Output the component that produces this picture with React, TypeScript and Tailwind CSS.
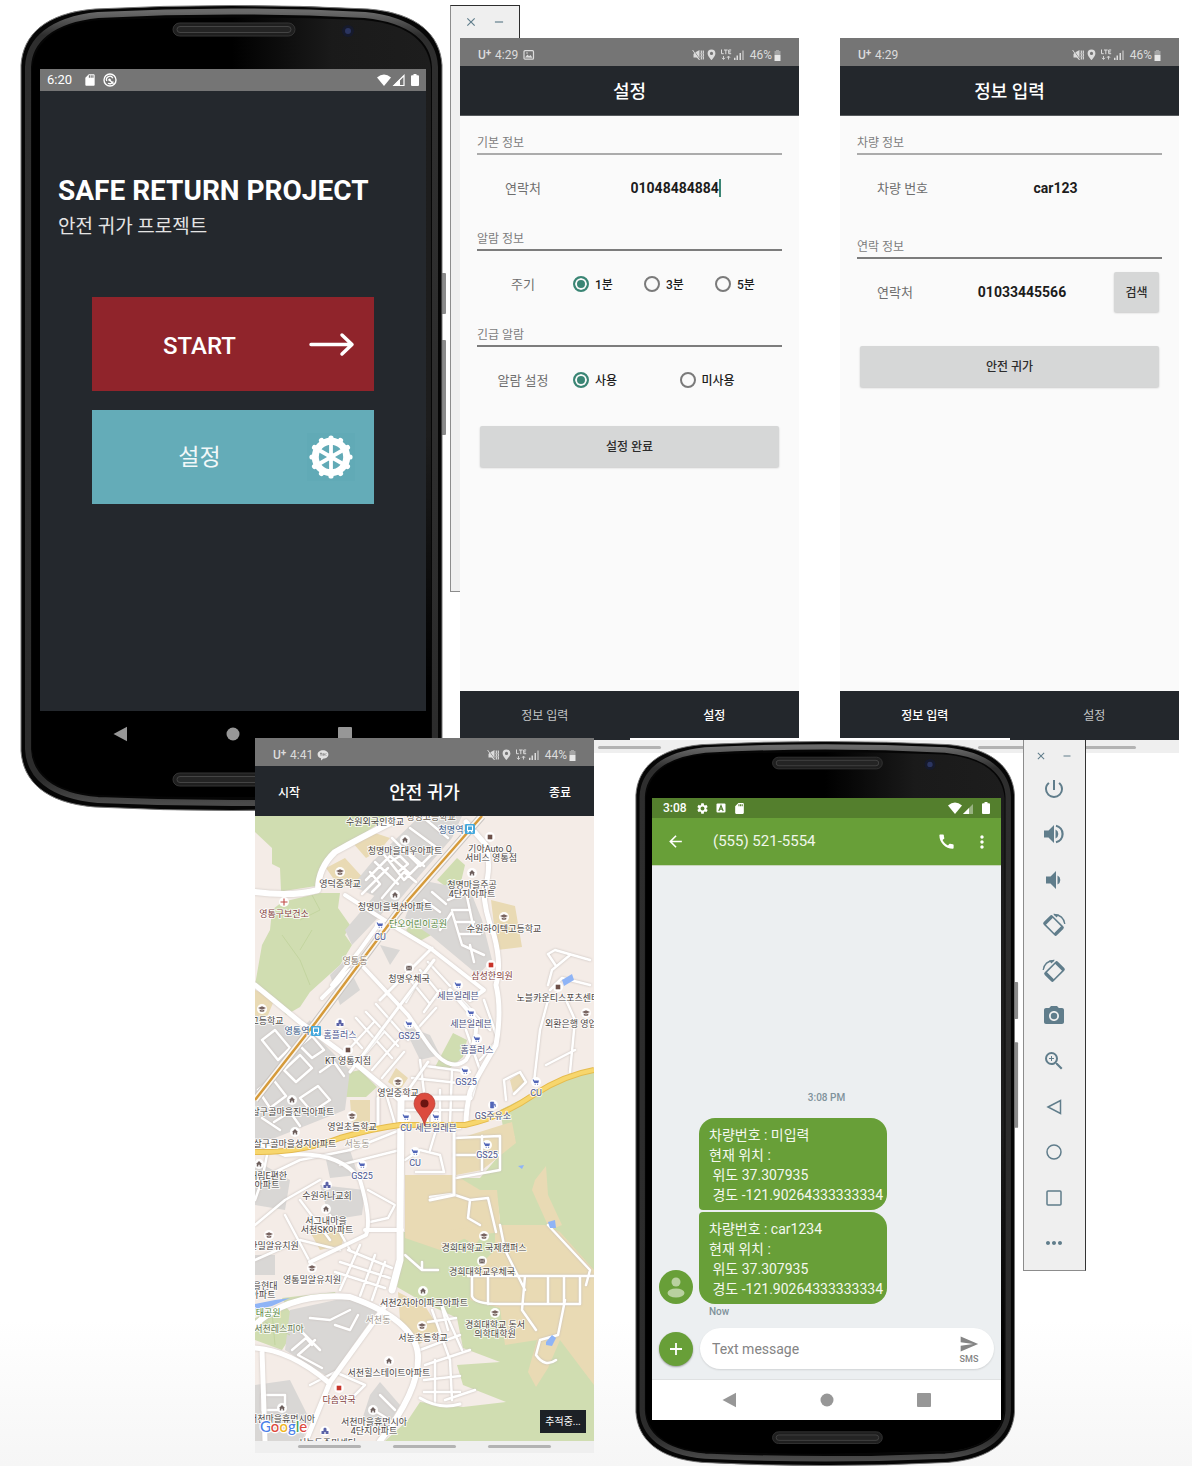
import React from "react";
import {
  MdArrowBack,
  MdCall,
  MdClose,
  MdMoreHoriz,
  MdMoreVert,
  MdPhotoCamera,
  MdPowerSettingsNew,
  MdRemove,
  MdSdCard,
  MdSend,
  MdSettings,
  MdZoomIn,
} from "react-icons/md";

/* ---------- device shell ---------- */

function PhoneShell({ id }: { id: string }) {
  return (
    <svg
      viewBox="0 0 427 806"
      preserveAspectRatio="none"
      className="absolute inset-0 h-full w-full"
      aria-hidden="true"
    >
      <defs>
        <linearGradient id={id + "face"} x1="0" x2="1" y1="0" y2="0">
          <stop offset="0.5" stopColor="#000" />
          <stop offset="0.75" stopColor="#1a1a1a" />
          <stop offset="1" stopColor="#1d1d1d" />
        </linearGradient>
        <linearGradient id={id + "fade"} x1="0" x2="0" y1="0" y2="1">
          <stop offset="0.5" stopColor="#000" stopOpacity="0" />
          <stop offset="0.85" stopColor="#000" />
        </linearGradient>
        <linearGradient id={id + "rim"} x1="0" x2="0" y1="0" y2="1">
          <stop offset="0" stopColor="#6a6a6a" />
          <stop offset="0.03" stopColor="#2e2e2e" />
          <stop offset="0.97" stopColor="#2c2c2c" />
          <stop offset="1" stopColor="#4a4a4a" />
        </linearGradient>
      </defs>
      <rect x="421" y="268" width="5" height="41" rx="1" fill="#8b8b8b" />
      <rect x="421" y="335" width="5" height="95" rx="1" fill="#8b8b8b" />
      <path
        d="M1 60C3 30 25 8 75 4Q212 -3 348 4C398 8 420 30 422 60V746C420 776 398 798 348 802Q212 809 75 802C25 798 3 776 1 746Z"
        fill="#060606"
        stroke="#777"
        strokeWidth="1"
      />
      <path
        d="M8 62C9 36 30 15 78 10Q212 3 345 10C393 15 414 36 415 62V744C414 770 393 791 345 795Q212 801 78 795C30 791 9 770 8 744Z"
        fill="none"
        stroke={"url(#" + id + "rim)"}
        strokeWidth="6"
      />
      <path
        d="M12 64C14 40 31 19 80 15Q212 10 343 15C392 19 409 40 411 64V742C409 766 392 787 343 790Q212 794 80 790C31 787 14 766 12 742Z"
        fill={"url(#" + id + "face)"}
      />
      <path
        d="M12 64H411V742C409 766 392 787 343 790Q212 794 80 790C31 787 14 766 12 742Z"
        fill={"url(#" + id + "fade)"}
      />
      <g fill="#1f1f1f" stroke="#343434">
        <rect x="153" y="18" width="122" height="13" rx="6.5" />
        <rect x="157" y="21.5" width="114" height="6" rx="3" fill="#242424" stroke="#444" />
        <rect x="153" y="768" width="122" height="13" rx="6.5" />
        <rect x="157" y="771.5" width="114" height="6" rx="3" fill="#242424" stroke="#444" />
      </g>
      <circle cx="328" cy="26" r="6" fill="#161a2c" />
      <circle cx="328" cy="26" r="3" fill="#2b3560" />
    </svg>
  );
}

function AndroidNav({ className, gap }: { className: string; gap: string }) {
  return (
    <nav className={"flex items-center justify-center text-[#979797] " + className + " " + gap}>
      <button aria-label="Back" className="flex h-4 w-4 items-center justify-center">
        <svg viewBox="0 0 16 16" className="h-4 w-4" fill="currentColor">
          <path d="M.5 8 14 .800v14.400z" />
        </svg>
      </button>
      <button aria-label="Home" className="flex h-4 w-4 items-center justify-center">
        <svg viewBox="0 0 16 16" className="h-4 w-4" fill="currentColor">
          <circle cx="8" cy="8" r="6.5" />
        </svg>
      </button>
      <button aria-label="Recents" className="flex h-4 w-4 items-center justify-center">
        <svg viewBox="0 0 16 16" className="h-4 w-4" fill="currentColor">
          <rect x="1" y="1" width="14" height="14" rx="1" />
        </svg>
      </button>
    </nav>
  );
}

function WifiSignalBattery({ hollow }: { hollow: boolean }) {
  return (
    <svg viewBox="0 0 44 14" className="h-[14px] w-11" fill="#fff" aria-hidden="true">
      <path d="M1 4.5Q8 -1.5 15 4.5L8 13z" />
      {hollow ? (
        <>
          <path d="M18 12.500 28 2.500V12.500z" fill="none" stroke="#fff" strokeWidth="1.200" />
          <path d="M17 13 24 6V13z" />
        </>
      ) : (
        <>
          <path d="M16 13 26 3V13z" opacity=".4" />
          <path d="M16 13 22 7V13z" />
        </>
      )}
      <path d="M37.500 1h3v1.300H42a1 1 0 0 1 1 1V12a1 1 0 0 1-1 1h-6a1 1 0 0 1-1-1V3.300a1 1 0 0 1 1-1h1.500z" />
    </svg>
  );
}

/* ---------- Samsung style screens ---------- */

function StatusBar({
  time,
  battery,
  notice,
}: {
  time: string;
  battery: string;
  notice?: "photo" | "talk";
}) {
  return (
    <div className="flex h-7 items-center bg-[#757575] px-[18px] pt-[6px] text-[12px] leading-[14px] text-[#dcdcdc]">
      <span className="w-[17px] font-medium">
        U<sup className="relative -top-[3px] text-[10px] leading-none font-bold">+</sup>
      </span>
      <span>{time}</span>
      {notice === "photo" && (
        <svg viewBox="0 0 12 12" className="ml-[5px] h-3 w-3" aria-hidden="true">
          <rect x="1" y="1.700" width="9.500" height="8.500" rx="1" fill="none" stroke="#dcdcdc" strokeWidth="1.200" />
          <path d="M2 8.500 4.500 5.500 6 7.200 7.500 6 9.500 8.700z" fill="#dcdcdc" />
          <circle cx="4" cy="4" r=".8" fill="#dcdcdc" />
        </svg>
      )}
      {notice === "talk" && (
        <svg viewBox="0 0 12 12" className="ml-[4px] h-3 w-3" aria-hidden="true">
          <path d="M6 1.200c3 0 5.400 1.800 5.400 4.200S9 9.500 6.500 9.500L4 11.500V9.200C2 8.700.6 7.200.6 5.400.6 3 3 1.200 6 1.200z" fill="#e2e2e2" />
          <path d="M3 4.300h2M4 4.300v2.400M6 6.700v-2.400M7 4.300v2.400M9.200 4.300 8 5.500l1.200 1.200" stroke="#757575" strokeWidth=".8" fill="none" />
        </svg>
      )}
      <svg viewBox="0 0 54 14" className="mr-[4px] ml-auto h-[14px] w-[54px]" fill="#dcdcdc" aria-hidden="true">
        <path d="M3 4.500 7.500 2v10L4.500 9.500H1.500V6z" />
        <path d="M1 1.500 8 11.500" stroke="#757575" strokeWidth=".8" />
        <path d="M.6 2 7.500 12" stroke="#dcdcdc" strokeWidth=".9" />
        <path d="M9 2.500 9.500 4 9 5.500 9.500 7 9 8.500 9.500 10 9 11.500M11 2.500 11.500 4 11 5.500 11.500 7 11 8.500 11.500 10 11 11.500" stroke="#dcdcdc" strokeWidth="1.100" fill="none" />
        <path fillRule="evenodd" d="M19.500 1.500a3.900 3.900 0 0 0-3.900 3.900c0 2.700 3.900 6.600 3.900 6.600s3.900-3.900 3.900-6.600a3.900 3.900 0 0 0-3.900-3.900zm0 2.300a1.600 1.600 0 1 1 0 3.200 1.600 1.600 0 0 1 0-3.200z" />
        <path d="M29.500 1.500v4.200h2.200M32 2h3.600M33.800 2v4.200M39.200 2h-2.500v3.700H39.200M36.700 3.900h2" stroke="#dcdcdc" strokeWidth="1" fill="none" />
        <path d="M31.500 8v3M30 9.800 31.500 11.500 33 9.800M36.500 11.500v-3M35 9.800 36.500 8 38 9.800" stroke="#dcdcdc" strokeWidth=".9" fill="none" />
        <path d="M42 9.800h1.500V12H42zM44.500 7.500H46V12h-1.500zM47.500 5H49v7h-1.500zM50.500 2.500h1V12h-1z" />
      </svg>
      <span>{battery}</span>
      <svg viewBox="0 0 7 11" className="ml-[2px] h-[11px] w-[7px]" aria-hidden="true">
        <path d="M2 0h3v1h1.500v4H.500V1H2z" fill="#a5a5a5" />
        <path d="M.5 5h6v6h-6z" fill="#e8e8e8" />
      </svg>
    </div>
  );
}

function GestureBar({ className }: { className: string }) {
  return (
    <div className={"flex justify-center gap-8 bg-[#efefef] " + className}>
      <span className="h-[3px] w-[63px] rounded-full bg-[#b3b3b3]" />
      <span className="h-[3px] w-[63px] rounded-full bg-[#b3b3b3]" />
      <span className="h-[3px] w-[63px] rounded-full bg-[#b3b3b3]" />
    </div>
  );
}

function TitleBar({ children }: { children: React.ReactNode }) {
  return (
    <header className="flex h-[50px] items-center justify-center border-b border-[#55595c] bg-[#23272c] pt-[3px] text-[18px] leading-6 font-medium text-white">
      {children}
    </header>
  );
}

function Tabs({ active }: { active: "info" | "setup" }) {
  const on = "flex-1 border-b-2 border-white pt-[3px] font-medium text-white";
  const off = "flex-1 border-b-2 border-[#23272c] pt-[3px] text-[#c4c5c6]";
  return (
    <nav className="mt-auto flex h-[49px] bg-[#23272c] text-[12px]">
      <button className={active === "info" ? on : off}>정보 입력</button>
      <button className={active === "setup" ? on : off}>설정</button>
    </nav>
  );
}

function SectionTitle({ children, light }: { children: React.ReactNode; light?: boolean }) {
  return (
    <h3
      className={
        light
          ? "h-[26px] border-b-2 border-[#ababab] text-[12px] leading-7 text-[#7d7d7d]"
          : "h-[26px] border-b-2 border-[#7c7c7c] text-[12px] leading-7 text-[#7d7d7d]"
      }
    >
      {children}
    </h3>
  );
}

function RadioRow({ label, name, options }: { label: string; name: string; options: string[] }) {
  return (
    <div role="radiogroup" aria-label={label} className="flex h-[66px] items-center">
      <span className="w-[92px] pt-px text-center text-[13px] text-[#6e6e6e]">{label}</span>
      <div className="-mr-1 flex flex-1 pl-1">
        {options.map((o, i) => (
          <label key={o} className="flex flex-1 items-center gap-[6px] text-[12px] font-medium text-[#1c1c1c]">
            <input
              type="radio"
              name={name}
              defaultChecked={i === 0}
              className="h-4 w-4 shrink-0 appearance-none rounded-full border-2 border-[#7a7a7a] checked:border-[#3a8574] checked:bg-[#3a8574] checked:shadow-[inset_0_0_0_2px_#fafafa]"
            />
            <span className="pt-px">{o}</span>
          </label>
        ))}
      </div>
    </div>
  );
}

const greyButton =
  "rounded-[2px] bg-[#d6d7d7] pt-px text-[12px] font-medium text-[#2c2c2c] shadow-[0_1px_2px_rgba(0,0,0,0.2)]";

function SettingsScreen() {
  return (
    <section className="relative flex h-[715px] flex-col bg-[#fafafa]">
      <StatusBar time="4:29" battery="46%" notice="photo" />
      <TitleBar>
        <h2>설정</h2>
      </TitleBar>
      <div className="flex flex-col gap-1 px-[17px] pt-[13px]">
        <div>
          <SectionTitle light>기본 정보</SectionTitle>
          <div className="flex h-[66px] items-center">
            <label htmlFor="my-phone" className="w-[92px] pt-px text-center text-[13px] text-[#6e6e6e]">
              연락처
            </label>
            <div className="flex flex-1 items-center justify-center">
              <input
                id="my-phone"
                defaultValue="01048484884"
                className="w-[88px] bg-transparent text-right text-[14px] font-bold text-[#1c1c1c] outline-none"
              />
              <span className="h-[18px] w-[2px] bg-[#3a8574]" />
            </div>
          </div>
        </div>
        <div>
          <SectionTitle>알람 정보</SectionTitle>
          <RadioRow label="주기" name="cycle" options={["1분", "3분", "5분"]} />
        </div>
        <div>
          <SectionTitle>긴급 알람</SectionTitle>
          <RadioRow label="알람 설정" name="alarm" options={["사용", "미사용"]} />
        </div>
      </div>
      <button className={"mx-5 mt-[13px] h-[41px] " + greyButton}>설정 완료</button>
      <Tabs active="setup" />
      <GestureBar className="h-[13px] pt-[6px]" />
    </section>
  );
}

function InfoScreen() {
  return (
    <section className="flex h-[715px] flex-col bg-[#fafafa]">
      <StatusBar time="4:29" battery="46%" />
      <TitleBar>
        <h2>정보 입력</h2>
      </TitleBar>
      <div className="flex flex-col gap-3 px-[17px] pt-[13px]">
        <div>
          <SectionTitle light>차량 정보</SectionTitle>
          <div className="flex h-[66px] items-center">
            <label htmlFor="car" className="w-[92px] pt-px pl-5 text-[13px] text-[#6e6e6e]">
              차량 번호
            </label>
            <input
              id="car"
              defaultValue="car123"
              className="w-0 flex-1 bg-transparent text-center text-[14px] font-bold text-[#1c1c1c] outline-none"
            />
          </div>
        </div>
        <div>
          <SectionTitle>연락 정보</SectionTitle>
          <div className="flex h-[66px] items-center pr-[3px]">
            <label htmlFor="contact" className="w-[73px] pt-px pl-5 text-[13px] text-[#6e6e6e]">
              연락처
            </label>
            <input
              id="contact"
              defaultValue="01033445566"
              className="w-0 flex-1 bg-transparent text-center text-[14px] font-bold text-[#1c1c1c] outline-none"
            />
            <button className={"h-10 w-[45px] " + greyButton}>검색</button>
          </div>
        </div>
      </div>
      <button className={"mx-5 mt-[21px] h-[41px] " + greyButton}>안전 귀가</button>
      <Tabs active="info" />
      <GestureBar className="h-[13px] pt-[6px]" />
    </section>
  );
}

/* ---------- map ---------- */

type Poi = "home" | "school" | "cart" | "dot" | "red" | "cross" | "mail" | "gas" | "build";

function PoiIcon({ x, y, kind }: { x: number; y: number; kind: Poi }) {
  return (
    <g transform={`translate(${x} ${y})`}>
      <circle r="5" fill="#fff" fillOpacity=".95" />
      {kind === "home" && <path d="M0-3 3 0H2.200V2.600H.700V.8H-.700V2.600H-2.200V0H-3z" fill="#6d5f5c" />}
      {kind === "school" && <path d="M0-2.800 4-1 0 .8-4-1zM-2.300.6 0 1.600 2.300.6V2.200Q0 3.400-2.300 2.200z" fill="#77635f" />}
      {kind === "cart" && <path d="M-3.500-2.600h1.300l.4 1H3L2.300 1.100H-1.800zM-1.300 1.700h1v1h-1zM1.100 1.700h1v1h-1z" fill="#5266b8" />}
      {kind === "dot" && <path d="M-2.300-2.300h4.600v4.600h-4.600z" fill="#6d5049" />}
      {kind === "red" && <path d="M-2.300-2.300h4.600v4.600h-4.600z" fill="#c8352b" />}
      {kind === "cross" && <path d="M-3.500 0h7M0-3.500v7" stroke="#c24b47" strokeWidth="1.100" />}
      {kind === "mail" && (
        <>
          <path d="M-2.800-2.200h5.600v4.600h-5.600z" fill="#6d5f5c" />
          <path d="M-2.800-2 0 .4 2.800-2M-2.800 2.200-.8 0M2.800 2.200.8 0" fill="none" stroke="#fff" strokeWidth=".5" />
        </>
      )}
      {kind === "gas" && <path d="M-2.500-3h3.200V3h-3.200zM.7-1l1.700.4V2" fill="#5266b8" stroke="#5266b8" strokeWidth=".6" />}
      {kind === "build" && <path d="M-3.500 3V0h2V-2.500L0-3.500 1.500-2.500V0h2v3H.600V1H-.600v2z" fill="#5b63a8" />}
    </g>
  );
}

const pois: [number, number, Poi][] = [
  [405, 840, "home"], [340, 872, "school"], [395, 895, "home"], [472, 873, "home"],
  [490, 837, "dot"], [284, 902, "cross"], [380, 925, "cart"], [504, 917, "school"],
  [409, 968, "mail"], [491, 965, "red"], [458, 985, "cart"], [558, 987, "dot"],
  [262, 1009, "school"], [340, 1023, "build"], [409, 1024, "cart"], [471, 1013, "cart"],
  [586, 1013, "school"], [348, 1050, "dot"], [477, 1039, "cart"], [465, 1071, "cart"],
  [398, 1082, "school"], [292, 1100, "home"], [536, 1082, "cart"], [493, 1105, "gas"],
  [352, 1116, "school"], [406, 1117, "cart"], [436, 1117, "cart"], [295, 1132, "home"],
  [415, 1152, "cart"], [487, 1145, "cart"], [362, 1165, "cart"], [259, 1164, "home"],
  [327, 1185, "build"], [326, 1209, "home"], [269, 1235, "school"], [484, 1236, "school"],
  [482, 1261, "mail"], [312, 1268, "school"], [423, 1291, "home"], [495, 1313, "school"],
  [422, 1326, "school"], [389, 1361, "home"], [282, 1408, "home"], [373, 1410, "home"],
  [339, 1388, "red"], [325, 1431, "build"],
];

const labels: [number, number, string, string][] = [
  [375, 825, "수원외국인학교", "#4b4644"],
  [431, 820, "청명고등학교", "#6a5c4c"],
  [451, 833, "청명역", "#35598a"],
  [405, 854, "청명마을대우아파트", "#4b4644"],
  [490, 852, "기아Auto Q", "#4b4644"],
  [491, 861, "서비스 영통점", "#4b4644"],
  [340, 887, "영덕중학교", "#4b4644"],
  [472, 888, "청명마을주공", "#4b4644"],
  [472, 897, "4단지아파트", "#4b4644"],
  [395, 910, "청명마을벽산아파트", "#4b4644"],
  [284, 917, "영통구보건소", "#84423f"],
  [418, 927, "단오어린이공원", "#57883c"],
  [380, 940, "CU", "#4a5692"],
  [504, 932, "수원하이텍고등학교", "#4b4644"],
  [355, 964, "영통동", "#8a7a6c"],
  [409, 982, "청명우체국", "#4b4644"],
  [492, 979, "삼성한의원", "#84423f"],
  [458, 999, "세븐일레븐", "#4a5080"],
  [558, 1001, "노블카운티스포츠센터", "#4b4644"],
  [267, 1024, "고등학교", "#4b4644"],
  [297, 1034, "영통역", "#35598a"],
  [340, 1038, "홈플러스", "#4a5692"],
  [409, 1039, "GS25", "#4a5692"],
  [471, 1027, "세븐일레븐", "#4a5080"],
  [575, 1027, "외환은행 영업부", "#4b4644"],
  [348, 1064, "KT 영통지점", "#4b4644"],
  [477, 1053, "홈플러스", "#4a5080"],
  [466, 1085, "GS25", "#4a5692"],
  [398, 1096, "영일중학교", "#4b4644"],
  [536, 1096, "CU", "#4a5692"],
  [293, 1115, "살구골마을진덕아파트", "#4b4644"],
  [493, 1119, "GS주유소", "#4a5080"],
  [352, 1130, "영일초등학교", "#4b4644"],
  [406, 1131, "CU", "#4a5692"],
  [436, 1131, "세븐일레븐", "#4a5080"],
  [295, 1147, "살구골마을성지아파트", "#4b4644"],
  [357, 1147, "서농동", "#a39a90"],
  [415, 1166, "CU", "#4a5692"],
  [487, 1158, "GS25", "#4a5692"],
  [362, 1179, "GS25", "#4a5692"],
  [268, 1179, "대림E편한", "#4b4644"],
  [267, 1188, "아파트", "#4b4644"],
  [327, 1199, "수원하나교회", "#4b4644"],
  [326, 1224, "서그내마을", "#4b4644"],
  [327, 1233, "서천SK아파트", "#4b4644"],
  [274, 1249, "한밀알유치원", "#4b4644"],
  [484, 1251, "경희대학교 국제캠퍼스", "#4b4644"],
  [482, 1275, "경희대학교우체국", "#4b4644"],
  [312, 1283, "영통밀알유치원", "#4b4644"],
  [261, 1289, "마을현대", "#4b4644"],
  [263, 1298, "아파트", "#4b4644"],
  [424, 1306, "서천2차아이파크아파트", "#4b4644"],
  [264, 1316, "생태공원", "#57883c"],
  [378, 1323, "서천동", "#a39a90"],
  [279, 1332, "서천레스피아", "#66784f"],
  [495, 1328, "경희대학교 동서", "#4b4644"],
  [495, 1337, "의학대학원", "#4b4644"],
  [423, 1341, "서농초등학교", "#4b4644"],
  [389, 1376, "서천힐스테이트아파트", "#4b4644"],
  [339, 1403, "다솜약국", "#84423f"],
  [282, 1422, "서천마을휴먼시아", "#4b4644"],
  [374, 1425, "서천마을휴먼시아", "#4b4644"],
  [374, 1434, "4단지아파트", "#4b4644"],
  [327, 1446, "서농동주민센터", "#4b4644"],
];

function MapDrawing() {
  return (
    <svg
      viewBox="255 816 339 625"
      preserveAspectRatio="xMidYMid slice"
      className="block h-[625px] w-full"
      role="img"
      aria-label="Map of Yeongtong-dong"
    >
      <rect x="255" y="816" width="339" height="625" fill="#f4ece7" />
      {/* parks and forest */}
      <g fill="#d0ddb1">
        <path d="M255 816H390L360 836 333 851 320 868 316 886 284 891H281L280 868 272 864V848L255 832z" />
        <path d="M282 902 320 893H340L338 908 350 925 345 935 352 945 340 965 310 992 300 1007 286 1015 275 998 255 985 262 945 270 930 272 910z" />
        <path d="M457 858 465 865 460 886H445L437 880zM413 922 430 920 437 932 418 942 406 930zM453 1033 467 1040 463 1057 450 1068 435 1067zM346 1073 360 1070 377 1087 366 1097H346z" />
        <path d="M594 1072 570 1074 534 1093 500 1110 503 1127 515 1137 480 1178H455L463 1190H496L500 1220 470 1232H403V1252L397 1287 423 1302 457 1318 463 1348 500 1362 457 1365 463 1385 506 1402 463 1407 420 1402 408 1420 385 1441H594z" />
        <path d="M255 1318 285 1306 300 1322 282 1350 255 1340zM282 1298 335 1292 337 1297 285 1304z" />
      </g>
      {/* school grounds and campus */}
      <g fill="#e9dab4">
        <path d="M334 856 352 842 366 858 380 850 390 838 372 832zM326 868 345 858 365 880 340 888zM491 900 515 906 522 947 497 950z" />
        <path d="M255 990 275 998 268 1015 255 1022zM396 1068 408 1078 400 1090 388 1082zM350 1100H370V1125H352zM437 816H452L436 828 415 826z" />
        <path d="M454 1140 512 1122 516 1143 482 1170 456 1175zM405 1175H455L480 1190H497L501 1232 470 1236 440 1250 405 1238z" />
        <path d="M308 1228H345L342 1245 320 1250zM398 1292 425 1306 440 1330 418 1345 400 1320z" />
        <path d="M470 1275 495 1250V1225H545L560 1232 594 1270V1385L560 1340 548 1368 536 1387 528 1372 537 1340 505 1345 500 1308 470 1300zM535 1180 546 1166 548 1195 562 1225 550 1230 532 1190zM450 1230 490 1225 475 1245zM510 1080 522 1072 525 1085 513 1092z" />
      </g>
      {/* apartment blocks */}
      <g fill="#d9d7d5">
        <path d="M372 862 420 816H462L452 838 420 875 395 905 352 886zM420 880 445 885 470 890 482 920 492 960 478 975 430 935 405 918zM345 930 375 895 390 905 352 945z" />
        <path d="M255 1015 285 1025 320 1040 350 1070 345 1110 270 1140 255 1140zM255 1075 310 1020 325 1050 290 1110z" />
        <path d="M380 945 400 950 390 965zM403 1025 430 1035 440 1055 420 1060zM330 975 345 960 360 990 340 1005zM325 1155 350 1150 358 1175 330 1178zM320 1185 365 1190 362 1215 330 1220z" />
        <path d="M290 1310 345 1298 378 1310 330 1378 285 1350zM255 1385 290 1380 310 1420 302 1441H255zM370 1395 380 1382 400 1405 385 1430 362 1420zM255 1255H275V1275H255zM255 1160 290 1180 285 1210 255 1205z" />
      </g>
      {/* local streets */}
      <g
        fill="none"
        stroke="#fff"
        strokeWidth="2.500"
        strokeLinejoin="round"
        strokeLinecap="round"
        className="drop-shadow-[0_0_1px_#c4bcb8]"
      >
        <path d="M366 880 390 856 410 874M375 862 398 884M362 894 388 868M382 852 404 880 418 866M400 846 424 866M392 838 420 866 436 850M410 828 440 850M424 818 448 838M382 898 404 872 416 882M370 872 380 884 372 892M390 862 400 856 408 864 398 872z" />
        <path d="M448 900 466 892 474 930M452 910H470M456 922H474M460 934H480M440 930 452 912 462 945 484 955M470 945 474 962M424 900 440 912M432 892 446 904" />
        <path d="M262 1040 275 1030 290 1048 278 1060zM284 1070 300 1055 312 1068 296 1082zM258 1090 272 1078 286 1096 270 1108zM300 1046 312 1036 324 1050 312 1058zM274 1122 290 1112 300 1126M262 1118 280 1130M300 1098 318 1086 330 1100 312 1112zM320 1072 334 1062 344 1076" />
        <path d="M346 1030 362 1048M356 1018 392 1058M366 1012 398 1046M376 1004 408 1040M360 1060 384 1032M350 1048 374 1022M372 1070 398 1040M382 1078 404 1052" />
        <path d="M420 970 438 992M412 982 430 1004M428 962 450 986M406 1002 420 978M424 1012 440 990M418 1028 436 1008" />
        <path d="M408 1098H466M405 1110H468M420 1060 428 1124M440 1090V1124M452 1070 450 1124M412 1078 468 1084M426 1066 470 1072M432 1100V1124M385 1090 395 1124M378 1090V1124M466 1030 480 1070 472 1098M484 1000 498 1040 480 1060M462 1000 490 1030" />
        <path d="M335 1272 385 1288M340 1262 390 1278M348 1250 392 1268M360 1245 340 1290M375 1255 360 1296M385 1262 372 1300M255 1260 300 1240 340 1250M300 1200 330 1240M285 1215 310 1262M330 1215 350 1250M340 1165 400 1150M350 1150 400 1130" />
        <path d="M432 1310 450 1360 452 1400M442 1305 462 1350M425 1365 470 1350M424 1380 460 1376M424 1392 460 1392M420 1350 460 1335M440 1300 448 1330M435 1360V1402M445 1400 475 1390M428 1322 456 1318" />
        <path d="M300 1330 320 1350M310 1318 330 1320 350 1310M315 1340 298 1355 322 1368M335 1325 350 1330 358 1315M262 1395H285V1410H262zM380 1395 395 1410M370 1408 390 1420M310 1385 335 1372 365 1385 350 1400M292 1350 306 1338 312 1345" />
        <path d="M454 1138 500 1136V1170L456 1178M405 1160 420 1150 440 1155 444 1172 416 1172M430 1150 436 1130 460 1128M482 1136V1170M454 1155H500M430 1197 452 1194 470 1200 488 1198 496 1232M470 1200 468 1218 480 1225" />
        <path d="M468 1276H594M472 1276V1296Q474 1304 500 1304H580V1276M488 1276V1304M548 1276V1304M564 1276V1304M525 1276 522 1310 536 1330M525 1290 505 1250 500 1225M548 1225 590 1270 586 1285M565 1300 558 1335 540 1340 536 1355Q545 1368 556 1360M405 1255 422 1270H438M422 1262V1270" />
        <path d="M556 966 548 954 555 950 590 960M548 985 552 970 570 955M590 985 562 978 550 990M534 1082 540 1030 548 1000M570 1072 575 1020 566 1000M575 1050 546 1065M506 1100 504 1080 520 1072 526 1082 514 1094" />
        <path d="M258 1180 300 1160 350 1150M270 1140 262 1180 255 1200M255 1225 285 1200 320 1180M368 1190 395 1205 388 1218 370 1222" />
      </g>
      <path
        d="M282 935 300 960 310 985M300 920 320 910 312 895M265 1322 290 1335M272 1312 275 1345M300 950 312 930"
        fill="none"
        stroke="#bfd29a"
        strokeWidth=".8"
      />
      {/* main streets */}
      <g
        fill="none"
        stroke="#fff"
        strokeLinecap="round"
        strokeLinejoin="round"
        className="drop-shadow-[0_0_1px_#c9c1bd]"
      >
        <path d="M392 822Q360 838 335 852 318 868 318 890 292 897 255 892" strokeWidth="6" />
        <path d="M466 822 486 845Q492 870 484 890 484 910 494 935 502 965 496 985 502 1010 496 1045 475 1080 470 1092 466 1110 466 1124" strokeWidth="5" />
        <path d="M345 895 400 930 430 948 484 990 470 1000" strokeWidth="4" />
        <path d="M255 985 300 1022 345 1055 385 1088 400 1100" strokeWidth="5" />
        <path d="M332 985 360 950 378 925M322 998 350 970M355 958 408 1015 425 1040Q448 1075 466 1060 478 1040 476 1020L450 990" strokeWidth="4" />
        <path d="M350 1072 434 960M404 1096 428 1062M432 948 380 1000" strokeWidth="3" />
        <path d="M402 1098H470" strokeWidth="5" />
        <path d="M401 1100 400 1228V1260L392 1290" strokeWidth="7" />
        <path d="M255 1142 285 1155Q340 1150 360 1180 372 1220 366 1235L310 1262" strokeWidth="4" />
        <path d="M378 1098V1125M454 1124 454 1195 430 1200" strokeWidth="3" />
        <path d="M255 1325Q290 1292 350 1297 415 1320 418 1355 420 1390 380 1441" strokeWidth="6" />
        <path d="M385 1306 330 1382 306 1441M255 1348Q290 1350 328 1382M262 1350 265 1441" strokeWidth="5" />
        <path d="M365 1230H402" strokeWidth="4" />
        <path d="M420 1398Q440 1410 460 1404" strokeWidth="3" />
      </g>
      {/* arterial road */}
      <path d="M255 1152Q300 1153 340 1138 375 1128 400 1125H465Q500 1118 535 1094 565 1075 594 1070" fill="none" stroke="#e5bb4d" strokeWidth="6" />
      <path d="M255 1152Q300 1153 340 1138 375 1128 400 1125H465Q500 1118 535 1094 565 1075 594 1070" fill="none" stroke="#f7d66d" strokeWidth="4" />
      {/* railway */}
      <path d="M482 816 398 912 316 1022 255 1100" fill="none" stroke="#c9c5c2" strokeWidth="8" />
      <path d="M482 816 398 912 316 1022 255 1100" fill="none" stroke="#faf6f1" strokeWidth="6" />
      <path d="M482 816 398 912 316 1022 255 1100" fill="none" stroke="#d59a3a" strokeWidth="2.500" />
      {/* water */}
      <path d="M562 980 572 974 574 980 564 986zM518 1166 524 1165 522 1169zM548 1222 555 1220 556 1228 550 1228zM546 1342 552 1335 556 1338 552 1346 546 1345zM255 1304 275 1300 290 1298 272 1306 255 1310z" fill="#8fb4f6" />
      {/* stations */}
      {[
        [470, 829],
        [316, 1031],
      ].map(([x, y]) => (
        <g key={x}>
          <rect x={x - 5} y={y - 5} width="10" height="10" rx="1" fill="#45a8dc" />
          <path d={`M${x - 2.5} ${y - 3}h5v4.500h-5zM${x - 2.5} ${y + 3.5}l1.500-1.500M${x + 2.5} ${y + 3.5}l-1.500-1.500`} fill="none" stroke="#fff" strokeWidth="1.100" />
        </g>
      ))}
      {pois.map(([x, y, kind]) => (
        <PoiIcon key={x + "-" + y} x={x} y={y} kind={kind} />
      ))}
      <g
        textAnchor="middle"
        fontSize="9"
        stroke="#fff"
        strokeOpacity=".8"
        strokeWidth="2"
        strokeLinejoin="round"
        paintOrder="stroke"
      >
        {labels.map(([x, y, text, color]) => (
          <text key={text + x + y} x={x} y={y} fill={color}>
            {text}
          </text>
        ))}
      </g>
      {/* pin */}
      <path d="M424.500 1126C423 1115 414 1111 414 1103.500a10.500 10.500 0 0 1 21 0C435 1111 426 1115 424.500 1126z" fill="#dc4b3e" stroke="#b13a30" strokeWidth=".7" />
      <circle cx="424.500" cy="1103.500" r="4" fill="#6c1511" />
      <text x="260" y="1432" fontSize="15" fontWeight="500" stroke="#fff" strokeWidth="2.500" paintOrder="stroke" fontFamily="Lato, sans-serif">
        <tspan fill="#4a80e8">G</tspan>
        <tspan fill="#dd4b3e">o</tspan>
        <tspan fill="#f0b51c">o</tspan>
        <tspan fill="#4a80e8">g</tspan>
        <tspan fill="#3f9e52">l</tspan>
        <tspan fill="#dd4b3e">e</tspan>
      </text>
    </svg>
  );
}

function MapScreen() {
  return (
    <section className="flex flex-col">
      <StatusBar time="4:41" battery="44%" notice="talk" />
      <header className="flex h-[50px] items-center justify-between bg-[#23272c] px-[23px] pt-[3px] text-[12px] font-medium text-white">
        <button>시작</button>
        <h2 className="text-[18px] leading-6">안전 귀가</h2>
        <button>종료</button>
      </header>
      <div className="relative">
        <MapDrawing />
        <div className="absolute right-2 bottom-2 flex h-[23px] w-[46px] items-center justify-center bg-[#1d2126] text-[10px] text-white">
          추적중...
        </div>
      </div>
      <GestureBar className="h-3 pt-1" />
    </section>
  );
}

/* ---------- launcher phone ---------- */

function HomePhone() {
  return (
    <section className="relative h-[806px] pt-16 pr-[21px] pl-5">
      <PhoneShell id="home" />
      <div className="relative">
        <div className="flex h-[22px] items-center bg-[#757575] pr-[6px] pl-[7px] text-[13px] text-white">
          <span>6:20</span>
          <MdSdCard className="ml-[11px] h-[14px] w-[14px]" />
          <svg viewBox="0 0 14 14" className="ml-[6px] h-[14px] w-[14px]" fill="none" stroke="#fff" aria-hidden="true">
            <circle cx="7" cy="7" r="6" strokeWidth="1.400" />
            <path d="M3.800 8A3.300 3.300 0 0 1 9.800 5.200M5 10.200A3.600 3.600 0 0 0 10.200 8.500M6 6.500 10.500 10.800" strokeWidth="1.300" />
            <circle cx="6.500" cy="6.800" r="1" fill="#fff" strokeWidth=".5" />
          </svg>
          <span className="ml-auto">
            <WifiSignalBattery hollow />
          </span>
        </div>
        <div className="flex h-[620px] flex-col bg-[#24282d] pt-[83px] text-white">
          <h1 className="px-[18px] text-[28px] leading-[34px] font-bold whitespace-nowrap">SAFE RETURN PROJECT</h1>
          <p className="mt-[7px] px-[18px] text-[19px] leading-6 text-[#e4e4e4]">안전 귀가 프로젝트</p>
          <div className="mx-[52px] mt-[58px] flex flex-col gap-[19px] text-[24px]">
            <button className="flex h-[94px] items-center bg-[#90242b] pr-[19px] font-medium">
              <span className="flex-1 pt-[3px]">START</span>
              <svg viewBox="0 0 48 48" className="h-12 w-12" fill="none" stroke="#fff" strokeWidth="3.500" strokeLinecap="round" strokeLinejoin="round" aria-hidden="true">
                <path d="M4 24.500H45M35 15 45 24.500 35 34" />
              </svg>
            </button>
            <button className="flex h-[94px] items-center bg-[#64acb8] pr-[19px] text-[23px] text-[#f2f8f9]">
              <span className="flex-1 pt-[3px]">설정</span>
              <svg viewBox="-24 -24 48 48" className="h-12 w-12 bg-[#61aab6]" aria-hidden="true">
                <circle r="15.700" fill="none" stroke="#fff" strokeWidth="7" />
                {[0, 30, 60, 90, 120, 150, 180, 210, 240, 270, 300, 330].map((a) => (
                  <circle key={a} cy="-19" r="2.600" fill="#fff" transform={`rotate(${a})`} />
                ))}
                {[0, 60, 120].map((a) => (
                  <path key={a} d="M0-14V14" stroke="#fff" strokeWidth="3.800" transform={`rotate(${a})`} />
                ))}
                <circle r="4" fill="#fff" />
              </svg>
            </button>
          </div>
        </div>
        <AndroidNav className="h-[45px] bg-black" gap="gap-24" />
      </div>
    </section>
  );
}

/* ---------- messaging phone ---------- */

function Bubble({ car, className }: { car: string; className: string }) {
  return (
    <p className={"w-[188px] bg-[#689f38] px-[10px] pt-[7px] pb-[5px] text-[14px] leading-5 whitespace-pre text-[#f4f8ef] " + className}>
      {"차량번호 : " + car + "\n현재 위치 :\n 위도 37.307935\n 경도 -121.90264333333334"}
    </p>
  );
}

function MessagePhone() {
  return (
    <section className="relative mt-[3px] h-[725px] pt-[57px] pr-[18px] pl-[17px]">
      <PhoneShell id="msg" />
      <div className="relative flex h-[622px] flex-col bg-[#eceff1]">
        <div className="flex h-5 items-center bg-[#547f2d] pr-[10px] pl-[11px] text-[12px] font-medium text-white">
          <span>3:08</span>
          <MdSettings className="ml-[9px] h-[13px] w-[13px]" />
          <svg viewBox="0 0 12 12" className="ml-[6px] h-3 w-3" aria-hidden="true">
            <rect x="1.500" y="1.500" width="9" height="9" rx="1" fill="#fff" />
            <path d="M3.800 9 6 3.500 8.200 9M4.700 7.200h2.600" fill="none" stroke="#547f2d" strokeWidth="1.200" />
          </svg>
          <MdSdCard className="ml-[6px] h-[13px] w-[13px]" />
          <span className="ml-auto">
            <WifiSignalBattery hollow={false} />
          </span>
        </div>
        <header className="flex h-12 items-center border-b border-[#c9d5bb] bg-[#689f38] pr-[9px] pl-[14px] text-white">
          <button aria-label="Back">
            <MdArrowBack className="h-[19px] w-[19px]" />
          </button>
          <h2 className="ml-7 text-[15px] text-[#f0f6ea]">(555) 521-5554</h2>
          <button aria-label="Call" className="ml-auto">
            <MdCall className="h-[19px] w-[19px]" />
          </button>
          <button aria-label="More options" className="ml-4">
            <MdMoreVert className="h-5 w-5" />
          </button>
        </header>
        <div className="mt-auto px-[7px]">
          <p className="text-center text-[10px] leading-3 font-medium text-[#80929b]">3:08 PM</p>
          <div className="mt-[14px] flex items-end gap-[6px]">
            <svg viewBox="0 0 34 34" className="h-[34px] w-[34px]" role="img" aria-label="Contact">
              <circle cx="17" cy="17" r="17" fill="#689f38" />
              <circle cx="17" cy="12" r="4.500" fill="#b9d19f" />
              <ellipse cx="17" cy="23" rx="8.500" ry="4.500" fill="#b9d19f" />
            </svg>
            <div className="flex flex-col gap-[2px]">
              <Bubble car="미입력" className="rounded-2xl rounded-bl-sm" />
              <Bubble car="car1234" className="rounded-2xl rounded-tl-sm" />
            </div>
          </div>
          <p className="mt-[2px] pl-[50px] text-[10px] leading-3 font-medium text-[#80929b]">Now</p>
          <div className="mt-[10px] mb-[10px] flex items-center gap-[7px]">
            <button
              aria-label="Add attachment"
              className="flex h-[34px] w-[34px] items-center justify-center rounded-full bg-[#689f38] shadow-[0_1px_2px_rgba(0,0,0,0.35)]"
            >
              <svg viewBox="0 0 14 14" className="h-[14px] w-[14px]" stroke="#fff" strokeWidth="1.800" aria-hidden="true">
                <path d="M1 7h12M7 1v12" />
              </svg>
            </button>
            <div className="flex h-[41px] flex-1 items-center rounded-full bg-white pr-[15px] pl-3 shadow-[0_1px_2px_rgba(0,0,0,0.12)]">
              <input
                aria-label="Text message"
                placeholder="Text message"
                className="w-0 flex-1 bg-transparent pt-px text-[14px] outline-none placeholder:text-[#848484]"
              />
              <button className="flex flex-col items-center text-[9px] leading-[10px] font-medium text-[#858585]">
                <MdSend className="h-5 w-5" />
                SMS
              </button>
            </div>
          </div>
        </div>
        <AndroidNav className="h-[41px] border-t border-[#dfe1e2] bg-white" gap="gap-[81px]" />
      </div>
    </section>
  );
}

/* ---------- emulator toolbar ---------- */

function RotateIcon({ flip }: { flip?: boolean }) {
  return (
    <svg viewBox="0 0 24 24" className={flip ? "h-6 w-6 -scale-x-100" : "h-6 w-6"} aria-hidden="true">
      <g transform="rotate(45 11.500 12.500)" fill="none" stroke="#607d8b">
        <rect x="3" y="7" width="17" height="11" rx="1" strokeWidth="1.600" />
        <path d="M4.300 7v11M18.700 7v11" strokeWidth="2.600" />
      </g>
      <path d="M12 1.500Q21.500 2 22.800 11" fill="none" stroke="#607d8b" strokeWidth="1.300" />
      <path d="M11 .8 17 1.800 14.500 4.500z" fill="#607d8b" />
    </svg>
  );
}

function Toolbar() {
  const tools: [string, React.ReactNode][] = [
    ["Power", <MdPowerSettingsNew className="h-6 w-6" />],
    [
      "Volume up",
      <svg viewBox="0 0 24 24" className="h-6 w-6" fill="currentColor">
        <path d="M2 8.500v7h4.500L12 21V3L6.500 8.500z" />
        <path d="M13.500 7.500a5 5 0 0 1 0 9z" />
        <path d="M14 3.800a8.400 8.400 0 0 1 0 16.400" fill="none" stroke="currentColor" strokeWidth="2.200" />
      </svg>,
    ],
    [
      "Volume down",
      <svg viewBox="0 0 24 24" className="h-6 w-6" fill="currentColor">
        <path d="M4 8.500v7h4.500L14 21V3L8.500 8.500z" />
        <path d="M15.500 7.500a5 5 0 0 1 0 9z" />
      </svg>,
    ],
    ["Rotate left", <RotateIcon />],
    ["Rotate right", <RotateIcon flip />],
    ["Take screenshot", <MdPhotoCamera className="h-6 w-6" />],
    ["Zoom", <MdZoomIn className="h-6 w-6" />],
    [
      "Back",
      <svg viewBox="0 0 24 24" className="h-6 w-6" fill="none" stroke="currentColor" strokeWidth="1.500">
        <path d="M6 12 18.500 5.500V18.500z" />
      </svg>,
    ],
    [
      "Home",
      <svg viewBox="0 0 24 24" className="h-6 w-6" fill="none" stroke="currentColor" strokeWidth="1.500">
        <circle cx="12" cy="12" r="7" />
      </svg>,
    ],
    [
      "Overview",
      <svg viewBox="0 0 24 24" className="h-6 w-6" fill="none" stroke="currentColor" strokeWidth="1.500">
        <rect x="5" y="5" width="14" height="14" rx="1" />
      </svg>,
    ],
    ["More", <MdMoreHoriz className="h-6 w-6" />],
  ];
  return (
    <aside className="mt-[2px] flex h-[531px] flex-col border border-t-0 border-[#8c8c8c] border-r-[#333] bg-[#efefef] pr-[2px] text-[#607d8b]">
      <div className="flex h-8 items-center justify-center gap-[14px] pb-px">
        <button aria-label="Close">
          <MdClose className="h-3 w-3" />
        </button>
        <button aria-label="Minimize">
          <MdRemove className="h-3 w-3" />
        </button>
      </div>
      <div className="flex flex-1 flex-col items-center justify-between pt-[5px] pb-[15px]">
        {tools.map(([name, icon]) => (
          <button key={name} aria-label={name} className="flex h-6 items-center">
            {icon}
          </button>
        ))}
      </div>
    </aside>
  );
}

export default function App() {
  return (
    <main className="min-h-screen overflow-hidden bg-white bg-gradient-to-t from-[#f6f6f6] to-white to-10% pt-[5px] font-[Roboto,'Noto_Sans_CJK_KR',sans-serif]">
      <div className="grid grid-cols-[20fr_427fr_13fr_339fr_41fr_339fr_13fr] items-start">
        <div className="col-start-2 min-w-0">
          <HomePhone />
        </div>
        <div className="relative col-start-4 min-w-0 pt-[33px]">
          <div className="absolute top-0 -left-[10px] flex h-[587px] w-[70px] items-start gap-[14px] border border-[#2d2d2d] border-b-[#8c8c8c] border-l-[#8c8c8c] bg-[#efefef] pt-[9px] pl-[13px] text-[#607d8b]">
            <button aria-label="Close emulator">
              <MdClose className="h-[14px] w-[14px]" />
            </button>
            <button aria-label="Minimize emulator">
              <MdRemove className="h-[14px] w-[14px]" />
            </button>
          </div>
          <SettingsScreen />
        </div>
        <div className="col-start-6 min-w-0 pt-[33px]">
          <InfoScreen />
        </div>
      </div>
      <div className="relative -mt-[73px] grid grid-cols-[255fr_339fr_41fr_384fr_4fr_63fr_106fr] items-start">
        <div className="col-start-2 min-w-0">
          <MapScreen />
        </div>
        <div className="col-start-4 min-w-0">
          <MessagePhone />
        </div>
        <div className="col-start-6 min-w-0">
          <Toolbar />
        </div>
      </div>
    </main>
  );
}
